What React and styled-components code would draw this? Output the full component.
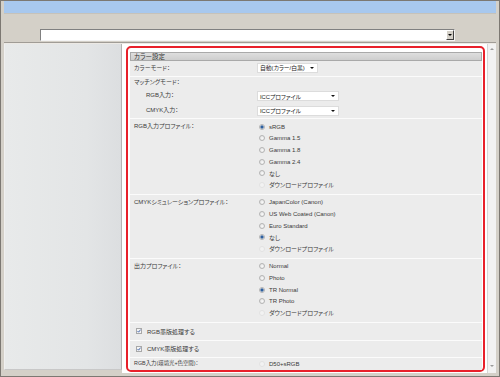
import styled, { createGlobalStyle } from "styled-components";

const GlobalStyle = createGlobalStyle`
  html, body {
    margin: 0;
    padding: 0;
  }
  body {
    font-family: "Liberation Sans", "Noto Sans CJK JP", sans-serif;
    background: #d4d0c8;
  }
`;

const Window = styled.div`
  width: 500px;
  height: 377px;
  box-sizing: border-box;
  background: #d4d0c8;
  border: 1px solid #7c7872;
  padding: 0 3px 3px;
  display: flex;
  flex-direction: column;
  overflow: hidden;
`;
const TitleBar = styled.div`
  flex: none;
  height: 12px;
  background: #a8c8ee;
`;
const Toolbar = styled.div`
  flex: none;
  height: 15px;
  box-sizing: border-box;
  border-top: 1px solid #c6c2ba;
  background: #d4d0c8;
`;
const AddressRow = styled.div`
  flex: none;
  height: 14px;
  display: flex;
  padding-left: 36px;
  padding-top: 1px;
  box-sizing: border-box;
`;
const AddressBox = styled.div`
  width: 415px;
  height: 12px;
  box-sizing: border-box;
  background: #fff;
  border-top: 1px solid #808080;
  border-left: 1px solid #808080;
  border-right: 1px solid #f4f4f4;
  border-bottom: 1px solid #f4f4f4;
  display: flex;
  justify-content: flex-end;
`;
const DropButton = styled.div`
  width: 8px;
  height: 10px;
  box-sizing: border-box;
  background: #d4d0c8;
  border-right: 1px solid #404040;
  border-bottom: 1px solid #404040;
  border-top: 1px solid #fff;
  border-left: 1px solid #fff;
  display: flex;
  align-items: center;
  justify-content: center;
  &::after {
    content: "";
    border-left: 2px solid transparent;
    border-right: 2px solid transparent;
    border-top: 2px solid #000;
  }
`;
const Body = styled.div`
  flex: 1;
  display: flex;
  border-top: 1px solid #a09c96;
  box-shadow: inset 0 1px 0 #ece9e4;
  padding-top: 1px;
`;
const SidePanel = styled.div`
  width: 118px;
  box-sizing: border-box;
  border-left: 1px solid #f0f0f0;
  border-right: 1px solid #b4b4b4;
  border-bottom: 1px solid #c8c8c8;
  margin-bottom: 3px;
  background: linear-gradient(to right, #e8eaea, #e3e5e6 70%, #dcdee0);
`;
const ContentArea = styled.div`
  width: 365px;
  box-sizing: border-box;
  background: #fff;
  padding: 2px 2px 1px 4px;
  display: flex;
`;
const ScrollBar = styled.div`
  width: 9px;
  box-sizing: border-box;
  background: #f2f2f2;
  border-left: 1px solid #d6d6d6;
  display: flex;
  flex-direction: column;
  justify-content: space-between;
  align-items: center;
  padding: 4px 0 6px;
`;
const ScrollArrow = styled.div`
  width: 0;
  height: 0;
  border-left: 2px solid transparent;
  border-right: 2px solid transparent;
  ${(p) =>
    p.$down ? "border-top: 2px solid #9a9a9a;" : "border-bottom: 2px solid #9a9a9a;"}
`;
const Highlight = styled.div`
  flex: 1;
  box-sizing: border-box;
  border: 2px solid #e8202a;
  border-radius: 5px;
  padding: 4px 1px 0 2px;
  display: flex;
  flex-direction: column;
`;
const Panel = styled.div`
  flex: 1;
  background: #ececec;
  display: flex;
  flex-direction: column;
  color: #3a3a3a;
  font-size: 6px;
  font-feature-settings: "palt";
`;
const Header = styled.div`
  height: 9px;
  box-sizing: border-box;
  border: 1px solid #a9a9a9;
  background: linear-gradient(#dedede, #cecece);
  padding-left: 3px;
  line-height: 7px;
  font-size: 6.5px;
  color: #333;
`;
const Section = styled.div`
  box-sizing: border-box;
  border-top: ${(p) => (p.$first ? "none" : "1px solid #fbfbfb")};
  height: ${(p) => p.$h}px;
  display: grid;
  grid-template-columns: 127px 1fr;
  align-content: ${(p) => (p.$top ? "start" : "center")};
  padding: ${(p) => (p.$top ? "2px 0 0" : "0")};
`;
const Group = styled.div`
  box-sizing: border-box;
  border-top: 1px solid #fbfbfb;
  height: ${(p) => p.$h}px;
  display: flex;
  flex-direction: column;
`;
const SubRow = styled.div`
  height: ${(p) => p.$h}px;
  display: grid;
  grid-template-columns: 127px 1fr;
  align-items: center;
`;
const Label = styled.div`
  padding-left: ${(p) => p.$indent || 4}px;
  line-height: 11.6px;
  white-space: nowrap;
  font-size: ${(p) => p.$size || 6}px;
`;
const Select = styled.div`
  width: ${(p) => p.$w}px;
  height: 10px;
  box-sizing: border-box;
  background: #fff;
  border: 1px solid #dcdcdc;
  display: flex;
  align-items: center;
  justify-content: space-between;
  padding: 0 3px 0 2px;
  font-size: 5.8px;
  color: #222;
  white-space: nowrap;
  &::after {
    content: "";
    border-left: 2px solid transparent;
    border-right: 2px solid transparent;
    border-top: 2px solid #111;
  }
`;
const Options = styled.div`
  display: flex;
  flex-direction: column;
  padding-left: 2px;
`;
const Option = styled.div`
  height: 11.6px;
  display: flex;
  align-items: center;
  gap: 4px;
  white-space: nowrap;
`;
const Radio = styled.span`
  width: 6px;
  height: 6px;
  box-sizing: border-box;
  border-radius: 50%;
  flex: none;
  border: 1px solid ${(p) => (p.$disabled ? "#e2e2e2" : "#b4b4b4")};
  background: ${(p) =>
    p.$checked
      ? "radial-gradient(circle, #2d5f9e 0 1.4px, #dfe6ee 1.8px)"
      : p.$disabled
      ? "#f2f2f2"
      : "radial-gradient(circle at 60% 60%, #fafafa, #dcdcdc)"};
`;
const CheckRow = styled.div`
  box-sizing: border-box;
  border-top: 1px solid #fbfbfb;
  height: ${(p) => p.$h}px;
  display: flex;
  align-items: center;
  gap: 5px;
  padding-left: 6px;
`;
const CheckBox = styled.span`
  width: 6px;
  height: 6px;
  box-sizing: border-box;
  border: 1px solid #a8a8a8;
  background: #f4f4f4;
  display: flex;
  align-items: center;
  justify-content: center;
  flex: none;
`;

const RadioGroup = ({ label, options, checked, h }) => (
  <Section $h={h} $top>
    <Label>{label}</Label>
    <Options>
      {options.map((o, i) => {
        const disabled = o === "ダウンロードプロファイル";
        return (
          <Option key={o + i}>
            <Radio $checked={i === checked} $disabled={disabled} />
            {o}
          </Option>
        );
      })}
    </Options>
  </Section>
);

const Check = ({ label, h }) => (
  <CheckRow $h={h}>
    <CheckBox>
      <svg width="4" height="4" viewBox="0 0 4 4">
        <path d="M0.5 2 L1.6 3.2 L3.6 0.6" stroke="#3a5fa8" strokeWidth="0.9" fill="none" />
      </svg>
    </CheckBox>
    {label}
  </CheckRow>
);

export default function App() {
  return (
    <>
      <GlobalStyle />
      <Window>
        <TitleBar />
        <Toolbar />
        <AddressRow>
          <AddressBox>
            <DropButton />
          </AddressBox>
        </AddressRow>
        <Body>
          <SidePanel />
          <ContentArea>
            <Highlight>
              <Panel>
                <Header>カラー設定</Header>
                <Section $first $h={15}>
                  <Label>カラーモード：</Label>
                  <Select $w={61}>自動(カラー/白黒)</Select>
                </Section>
                <Group $h={42}>
                  <SubRow $h={12}>
                    <Label>マッチングモード：</Label>
                  </SubRow>
                  <SubRow $h={14.5}>
                    <Label $indent={16}>RGB入力：</Label>
                    <Select $w={82}>ICCプロファイル</Select>
                  </SubRow>
                  <SubRow $h={14.5}>
                    <Label $indent={16}>CMYK入力：</Label>
                    <Select $w={82}>ICCプロファイル</Select>
                  </SubRow>
                </Group>
                <RadioGroup
                  h={75.6}
                  label="RGB入力プロファイル："
                  checked={0}
                  options={["sRGB", "Gamma 1.5", "Gamma 1.8", "Gamma 2.4", "なし", "ダウンロードプロファイル"]}
                />
                <RadioGroup
                  h={64}
                  label="CMYKシミュレーションプロファイル："
                  checked={3}
                  options={["JapanColor (Canon)", "US Web Coated (Canon)", "Euro Standard", "なし", "ダウンロードプロファイル"]}
                />
                <RadioGroup
                  h={64}
                  label="出力プロファイル："
                  checked={2}
                  options={["Normal", "Photo", "TR Normal", "TR Photo", "ダウンロードプロファイル"]}
                />
                <Check h={18.4} label="RGB墨版処理する" />
                <Check h={17} label="CMYK墨版処理する" />
                <Section $h={13}>
                  <Label $size={5.4}>RGB入力(環境光+色空間)：</Label>
                  <Options>
                    <Option>
                      <Radio $disabled $checked={false} />
                      D50+sRGB
                    </Option>
                  </Options>
                </Section>
              </Panel>
            </Highlight>
          </ContentArea>
          <ScrollBar>
            <ScrollArrow />
            <ScrollArrow $down />
          </ScrollBar>
        </Body>
      </Window>
    </>
  );
}
